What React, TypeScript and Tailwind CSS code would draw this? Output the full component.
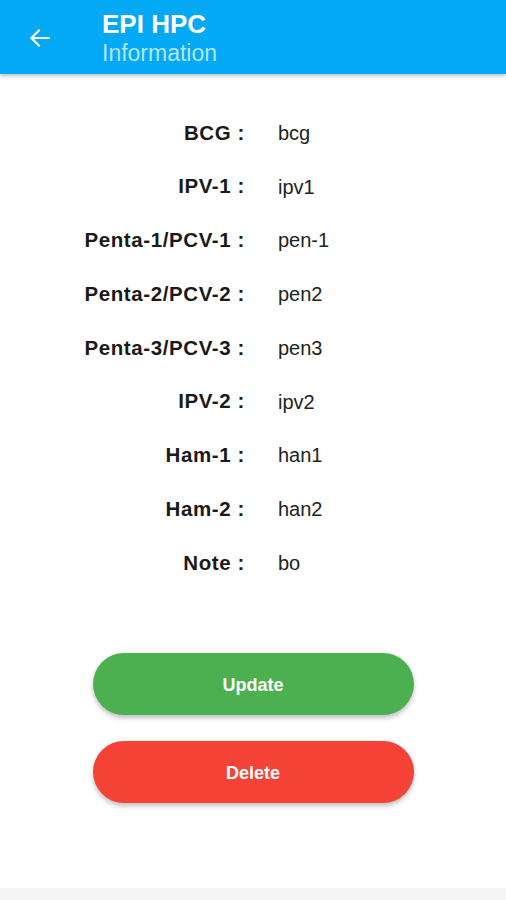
import React from 'react'

const rows = [
  { label: 'BCG', value: 'bcg' },
  { label: 'IPV-1', value: 'ipv1' },
  { label: 'Penta-1/PCV-1', value: 'pen-1' },
  { label: 'Penta-2/PCV-2', value: 'pen2' },
  { label: 'Penta-3/PCV-3', value: 'pen3' },
  { label: 'IPV-2', value: 'ipv2' },
  { label: 'Ham-1', value: 'han1' },
  { label: 'Ham-2', value: 'han2' },
  { label: 'Note', value: 'bo' },
]

const App: React.FC = () => {
  return (
    <div className="flex h-[900px] w-[506px] flex-col bg-white font-['Liberation_Sans',Arial,sans-serif]">
      <div className="relative z-10 flex h-[74px] items-center bg-[#03A9F4] shadow-[0_2px_4px_rgba(0,0,0,0.25)]">
        <div className="flex w-[102px] justify-start pl-[27px] pt-[2px]">
          <svg width="26" height="26" viewBox="0 0 24 24" fill="none">
            <path d="M20 12H5M11 5l-7 7 7 7" stroke="white" strokeWidth="2" strokeLinecap="square" />
          </svg>
        </div>
        <div className="flex flex-col pt-[3px]">
          <span className="text-[26px] font-bold leading-[30px] text-white">EPI HPC</span>
          <span className="text-[23px] leading-[29px] text-[#B3E5FC]">Information</span>
        </div>
      </div>

      <div className="flex flex-col pt-[32px]">
        {rows.map((row) => (
          <div key={row.label} className="flex h-[53.75px] items-center">
            <div className="w-[245px] text-right text-[20.5px] font-bold tracking-[0.6px] text-[#1a1a1a]">
              {row.label} :
            </div>
            <div className="pl-[33px] text-[20px] text-[#222]">{row.value}</div>
          </div>
        ))}
      </div>

      <div className="mt-[63px] flex flex-col items-center gap-[26px]">
        <button className="h-[62px] w-[321px] rounded-full bg-[#4CAF50] pt-[3px] text-[18px] font-bold text-white shadow-[0_3px_5px_rgba(0,0,0,0.25)]">
          Update
        </button>
        <button className="h-[62px] w-[321px] rounded-full bg-[#F44336] pt-[3px] text-[18px] font-bold text-white shadow-[0_3px_5px_rgba(0,0,0,0.25)]">
          Delete
        </button>
      </div>

      <div className="mt-auto h-[12px] bg-[#f5f5f5]" />
    </div>
  )
}

export default App
